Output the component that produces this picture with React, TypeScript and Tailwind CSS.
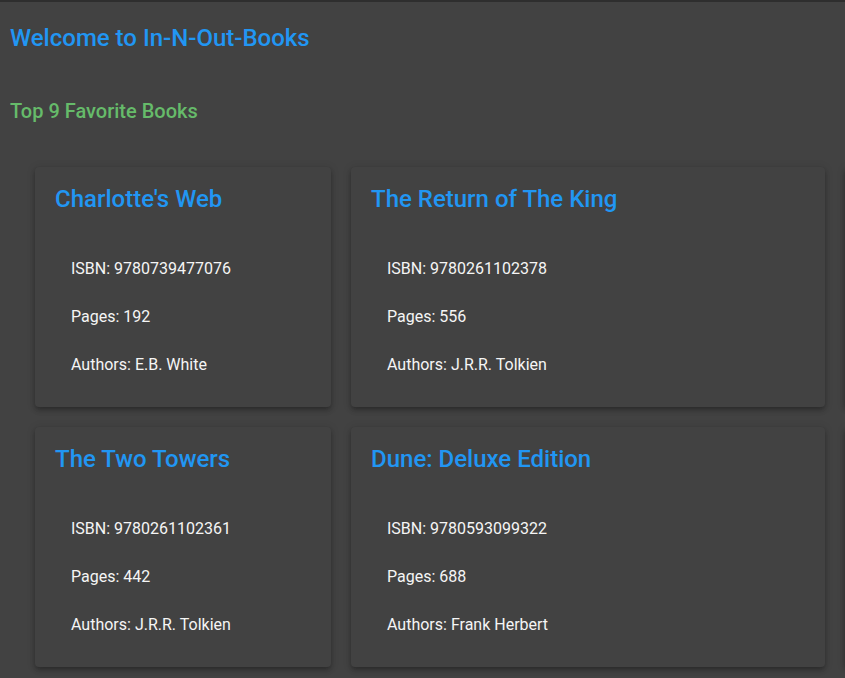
import React from 'react'

type Book = { title: string; isbn: string; pages: number; authors: string }

const books: (Book | null)[] = [
  { title: "Charlotte's Web", isbn: '9780739477076', pages: 192, authors: 'E.B. White' },
  { title: 'The Return of The King', isbn: '9780261102378', pages: 556, authors: 'J.R.R. Tolkien' },
  null,
  { title: 'The Two Towers', isbn: '9780261102361', pages: 442, authors: 'J.R.R. Tolkien' },
  { title: 'Dune: Deluxe Edition', isbn: '9780593099322', pages: 688, authors: 'Frank Herbert' },
  null,
]

function BookCard({ book }: { book: Book | null }) {
  return (
    <div className="h-[240px] rounded-[4px] bg-[#424242] px-5 pt-4 shadow-[0_2px_4px_-1px_rgba(0,0,0,0.2),0_4px_5px_0_rgba(0,0,0,0.14),0_1px_10px_0_rgba(0,0,0,0.12)]">
      {book && (
        <>
          <h2 className="text-[24px] leading-8 font-medium text-[#2196f3]">{book.title}</h2>
          <div className="mt-[42px] pl-4 flex flex-col gap-6 text-[16px] leading-6 text-[#f5f5f5]">
            <p>ISBN: {book.isbn}</p>
            <p>Pages: {book.pages}</p>
            <p>Authors: {book.authors}</p>
          </div>
        </>
      )}
    </div>
  )
}

export default function App() {
  return (
    <div className="h-[678px] w-full overflow-hidden bg-[#424242] border-t-2 border-[#2e2e2e] pl-[10px] font-['Roboto',sans-serif]">
      {/* Header */}
      <h1 className="mt-5 text-[24px] leading-8 font-medium text-[#2196f3]">Welcome to In-N-Out-Books</h1>
      <h3 className="mt-[43px] text-[20px] leading-7 font-medium text-[#66bb6a]">Top 9 Favorite Books</h3>

      {/* Book grid */}
      <div className="mt-[42px] ml-[25px] grid w-max grid-cols-[296px_474px_300px] gap-5">
        {books.map((book, i) => (
          <BookCard key={i} book={book} />
        ))}
      </div>
    </div>
  )
}
